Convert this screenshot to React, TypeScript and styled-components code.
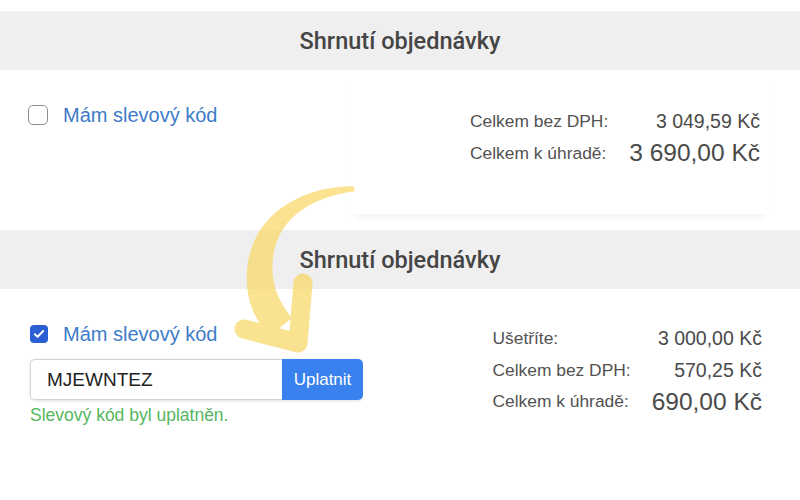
import React from "react";
import styled, { createGlobalStyle } from "styled-components";

const Global = createGlobalStyle`
  html, body { margin: 0; padding: 0; background: #fff; }
  body { font-family: "Liberation Sans", Arial, sans-serif; }
`;

const Page = styled.div`
  position: relative;
  width: 800px;
  height: 500px;
  overflow: hidden;
  background: #fff;
`;

const TopStrip = styled.div`
  height: 11px;
  display: flex;
  justify-content: flex-end;
  padding-right: 32px;
`;

const TopCardEdge = styled.div`
  width: 420px;
  height: 6px;
  background: #fff;
  box-shadow: 0 4px 6px -3px rgba(0, 0, 0, 0.08);
`;

const Header = styled.div`
  height: 59px;
  background: #efefef;
  display: flex;
  align-items: center;
  justify-content: center;
  font-family: Roboto, "Liberation Sans", sans-serif;
  font-weight: 500;
  font-size: 23.5px;
  color: #454545;
`;

const Body = styled.div<{ $h: number }>`
  height: ${(p) => p.$h}px;
  display: flex;
  justify-content: space-between;
  align-items: flex-start;
`;

const Left = styled.div<{ $pl: number }>`
  padding-top: 34px;
  padding-left: ${(p) => p.$pl}px;
  display: flex;
  flex-direction: column;
`;

const CheckRow = styled.label`
  display: flex;
  align-items: center;
  gap: 15px;
  height: 22px;
  font-size: 20px;
  color: #3d7bc8;
  cursor: pointer;
`;

const Box = styled.span<{ $checked?: boolean }>`
  box-sizing: border-box;
  width: ${(p) => (p.$checked ? 18 : 20)}px;
  height: ${(p) => (p.$checked ? 18 : 20)}px;
  border-radius: ${(p) => (p.$checked ? 4 : 5)}px;
  border: ${(p) => (p.$checked ? "none" : "1.5px solid #8c8c8c")};
  background: ${(p) => (p.$checked ? "#2c5fd4" : "#fff")};
  display: flex;
  align-items: center;
  justify-content: center;
`;

const CodeForm = styled.div`
  margin-top: 14px;
  display: flex;
  width: 333px;
  height: 41px;
  border-radius: 5px;
  box-shadow: 0 1px 3px rgba(0, 0, 0, 0.12);
`;

const CodeInput = styled.div`
  box-sizing: border-box;
  flex: 1;
  border: 1px solid #d2d2d2;
  border-right: none;
  border-radius: 5px 0 0 5px;
  display: flex;
  align-items: center;
  padding-left: 16px;
  font-size: 19px;
  color: #222;
  background: #fff;
`;

const ApplyButton = styled.button`
  width: 81px;
  border: none;
  border-radius: 0 5px 5px 0;
  background: #3881ee;
  color: #fff;
  font-family: "Liberation Sans", Arial, sans-serif;
  font-size: 17px;
  padding: 0;
`;

const Success = styled.div`
  margin-top: 5px;
  font-size: 17.5px;
  line-height: 20px;
  color: #55b65f;
`;

const Card = styled.div<{ $shadow?: boolean; $h: number; $pr: number; $pt: number }>`
  box-sizing: border-box;
  width: 418px;
  height: ${(p) => p.$h}px;
  margin-right: 32px;
  padding-top: ${(p) => p.$pt}px;
  padding-right: ${(p) => p.$pr}px;
  background: #fff;
  box-shadow: ${(p) => (p.$shadow ? "0 7px 8px -5px rgba(0,0,0,0.08)" : "none")};
  display: flex;
  justify-content: flex-end;
`;

const Totals = styled.div<{ $row: number }>`
  display: grid;
  grid-template-columns: auto auto;
  grid-auto-rows: ${(p) => p.$row}px;
  column-gap: 21px;
  align-items: center;
`;

const Label = styled.div`
  font-size: 17.4px;
  color: #525252;
`;

const Value = styled.div<{ $big?: boolean }>`
  text-align: right;
  font-size: ${(p) => (p.$big ? 24.5 : 19.5)}px;
  color: #4a4a4a;
  white-space: nowrap;
`;

const ArrowLayer = styled.svg`
  position: absolute;
  left: 0;
  top: 0;
  pointer-events: none;
`;

const Check = () => (
  <svg width="12" height="10" viewBox="0 0 12 10">
    <path d="M1.8 5.2 L4.6 7.8 L10.2 2" fill="none" stroke="#fff" strokeWidth="2" strokeLinecap="round" strokeLinejoin="round" />
  </svg>
);

type Row = { label: string; value: string; big?: boolean };

const SummaryRows = ({ rows, rowH }: { rows: Row[]; rowH: number }) => (
  <Totals $row={rowH}>
    {rows.map((r) => (
      <React.Fragment key={r.label}>
        <Label>{r.label}</Label>
        <Value $big={r.big}>{r.value}</Value>
      </React.Fragment>
    ))}
  </Totals>
);

export default function App() {
  return (
    <Page>
      <Global />
      <TopStrip>
        <TopCardEdge />
      </TopStrip>

      <Header>Shrnutí objednávky</Header>
      <Body $h={160}>
        <Left $pl={28}>
          <CheckRow>
            <Box />
            Mám slevový kód
          </CheckRow>
        </Left>
        <Card $shadow $h={144} $pt={35} $pr={8}>
          <SummaryRows
            rowH={32}
            rows={[
              { label: "Celkem bez DPH:", value: "3 049,59 Kč" },
              { label: "Celkem k úhradě:", value: "3 690,00 Kč", big: true },
            ]}
          />
        </Card>
      </Body>

      <Header>Shrnutí objednávky</Header>
      <Body $h={211}>
        <Left $pl={30}>
          <CheckRow>
            <Box $checked>
              <Check />
            </Box>
            Mám slevový kód
          </CheckRow>
          <CodeForm>
            <CodeInput>MJEWNTEZ</CodeInput>
            <ApplyButton>Uplatnit</ApplyButton>
          </CodeForm>
          <Success>Slevový kód byl uplatněn.</Success>
        </Left>
        <Card $h={150} $pt={34} $pr={6}>
          <SummaryRows
            rowH={31.5}
            rows={[
              { label: "Ušetříte:", value: "3 000,00 Kč" },
              { label: "Celkem bez DPH:", value: "570,25 Kč" },
              { label: "Celkem k úhradě:", value: "690,00 Kč", big: true },
            ]}
          />
        </Card>
      </Body>

      <ArrowLayer width="800" height="500" viewBox="0 0 800 500">
        <g opacity="0.72">
          <path
            d="M353 186 C300 187 256 214 248 262 C243 296 254 320 270 336 L292 318 C279 302 270 284 273 258 C277 224 302 199 355 191 Z"
            fill="#f8d766"
          />
          <path
            d="M244 329 L298 343 L303 283"
            fill="none"
            stroke="#f8d766"
            strokeWidth="19"
            strokeLinecap="round"
            strokeLinejoin="round"
          />
        </g>
      </ArrowLayer>
    </Page>
  );
}
